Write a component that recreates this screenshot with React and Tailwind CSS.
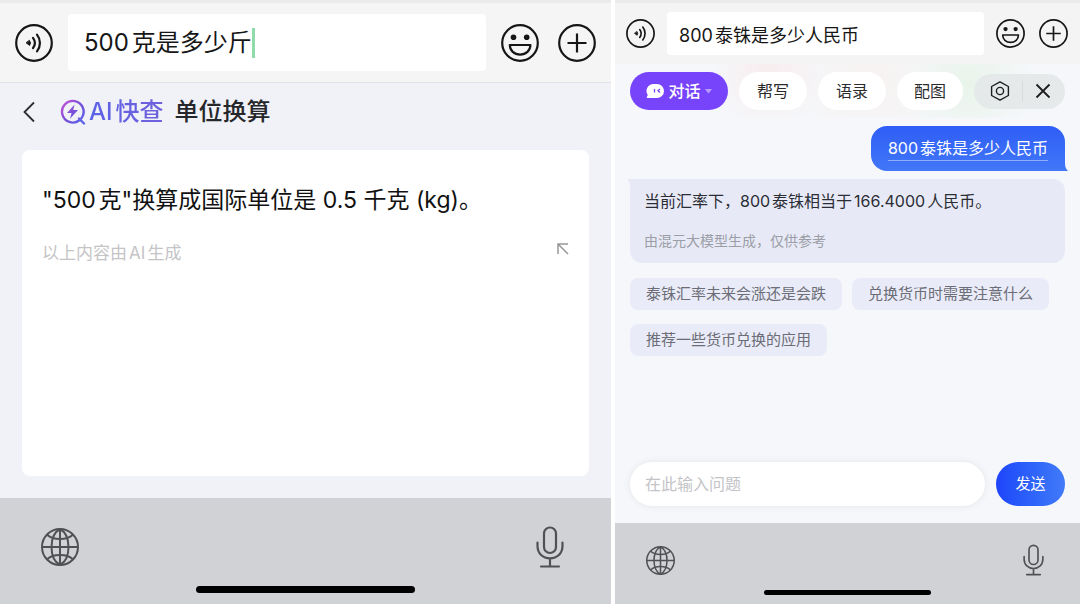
import React, { useState } from 'react'

const suggestions = ['泰铢汇率未来会涨还是会跌', '兑换货币时需要注意什么', '推荐一些货币兑换的应用']

const VoiceIcon = ({ className }) => (
  <svg viewBox="0 0 38 38" fill="none" stroke="#161616" strokeWidth="2.2" strokeLinecap="round" className={className}>
    <circle cx="19" cy="19" r="17.8" />
    <path d="M14.600 16.600a4 4 0 0 1 0 4.800L11.400 19z" fill="#161616" strokeWidth="1" strokeLinejoin="round" />
    <path d="M18 13.900a8.500 8.500 0 0 1 0 10.200M22 10.600a13.500 13.500 0 0 1 0 16.800" />
  </svg>
)

const SmileIcon = ({ className }) => (
  <svg viewBox="0 0 38 38" fill="none" stroke="#161616" strokeWidth="2.2" strokeLinejoin="round" className={className}>
    <circle cx="19" cy="19" r="17.8" />
    <circle cx="12.500" cy="13.200" r="2.800" fill="#161616" stroke="none" />
    <circle cx="25.700" cy="13.200" r="2.800" fill="#161616" stroke="none" />
    <path d="M8.800 21h20.600c0 5.600-4.400 9.600-10.300 9.600S8.800 26.600 8.800 21z" />
  </svg>
)

const PlusIcon = ({ className }) => (
  <svg viewBox="0 0 38 38" fill="none" stroke="#161616" strokeWidth="2.2" className={className}>
    <circle cx="19" cy="19" r="17.8" />
    <path d="M19 9.500v19M9.500 19h19" />
  </svg>
)

const GlobeIcon = ({ className }) => (
  <svg viewBox="0 0 38 38" fill="none" stroke="#505155" strokeWidth="2" className={className}>
    <circle cx="19" cy="19" r="18" />
    <path d="M19 1v36M1 19h36" />
    <path d="M19 1c-5.500 3-8.500 10-8.500 18s3 15 8.500 18M19 1c5.500 3 8.500 10 8.500 18s-3 15-8.500 18" />
    <path d="M6.200 6.800C9 9.500 13.500 11 19 11s10-1.500 12.800-4.200M6.200 31.200C9 28.500 13.500 27 19 27s10 1.500 12.800 4.200" />
  </svg>
)

const MicIcon = ({ className }) => (
  <svg viewBox="0 0 28 42" fill="none" stroke="#505155" strokeWidth="2.2" strokeLinecap="round" className={className}>
    <rect x="8" y="1.500" width="12" height="25.500" rx="6" />
    <path d="M1.500 16.500v3.500c0 7.500 5.500 12.300 12.500 12.300s12.500-4.800 12.500-12.300v-3.500M14 32.500v8M5 40.500h18" />
  </svg>
)

const QuickSearchIcon = () => (
  <svg viewBox="0 0 26 26" fill="none" className="size-[26px]">
    <defs>
      <linearGradient id="quick" x1="2" y1="3" x2="23" y2="23" gradientUnits="userSpaceOnUse">
        <stop stopColor="#c453d6" />
        <stop offset="0.5" stopColor="#7a4fd8" />
        <stop offset="1" stopColor="#5a63ea" />
      </linearGradient>
    </defs>
    <path d="M19.500 21.200A10.800 10.800 0 1 1 21.600 19M19 19.500L24 24.500" stroke="url(#quick)" strokeWidth="2.4" strokeLinecap="round" strokeLinejoin="round" />
    <path d="M14.600 5.500L7 13.900h4.600L10 19.800l8-8.800h-4.800z" fill="url(#quick)" />
  </svg>
)

const LeftPanel = () => {
  const [text, setText] = useState('500克是多少斤')

  return (
    <section className="flex flex-col bg-[#f0f2f7]">
      <div className="flex items-center border-t-3 border-b border-t-[#ebebec] border-b-[#e1e1e5] bg-[#f5f5f6] px-[15px] pt-[11px] pb-[11px]">
        <button aria-label="语音输入">
          <VoiceIcon className="size-[38px]" />
        </button>
        <label className="mx-[15px] flex h-[57px] flex-1 items-center rounded-sm bg-white px-4">
          <input
            aria-label="消息"
            value={text}
            onChange={(e) => setText(e.target.value)}
            className="field-sizing-content text-2xl text-[#161616] outline-none"
          />
          <span className="h-[30px] w-[3px] bg-[#8fdcaa]" />
        </label>
        <button aria-label="表情">
          <SmileIcon className="size-[38px]" />
        </button>
        <button aria-label="更多" className="ml-[19px]">
          <PlusIcon className="size-[38px]" />
        </button>
      </div>

      <div className="flex flex-1 flex-col px-[22px] pt-3 pb-[22px]">
        <header className="flex h-[34px] items-center">
          <button aria-label="返回">
            <svg viewBox="0 0 14 22" fill="none" stroke="#2b2c30" strokeWidth="1.8" className="h-[22px] w-[14px]">
              <path d="M12 1.500L2.500 11l9.500 9.500" />
            </svg>
          </button>
          <div className="ml-6 flex items-center gap-[3px]">
            <QuickSearchIcon />
            <span className="bg-linear-to-r from-[#5b62e6] to-[#7060dc] bg-clip-text text-2xl font-medium text-transparent">
              AI快查
            </span>
          </div>
          <h1 className="ml-[11px] text-2xl font-medium text-[#26272b]">单位换算</h1>
        </header>

        <article className="mt-[21px] flex-1 rounded-lg bg-white px-5 pt-8">
          <p className="text-[23px] leading-9 text-[#111]">"500克"换算成国际单位是 0.5 千克 (kg)。</p>
          <div className="mt-[21px] flex items-center justify-between">
            <p className="text-[17px] leading-7 text-[#c4c4c6]">以上内容由AI生成</p>
            <button aria-label="填入" className="mb-2">
              <svg viewBox="0 0 12 12" fill="none" stroke="#98989b" strokeWidth="1.5" className="size-3">
                <path d="M1 11V1h10M1 1l10 10" />
              </svg>
            </button>
          </div>
        </article>
      </div>

      <footer className="flex h-[106px] flex-col items-center bg-[#d1d2d6]">
        <div className="flex w-full items-center justify-between pt-7 pr-[47px] pl-[41px]">
          <button aria-label="切换键盘">
            <GlobeIcon className="size-[38px]" />
          </button>
          <button aria-label="听写">
            <MicIcon className="h-[42px] w-7" />
          </button>
        </div>
        <div className="mt-[18px] h-[7px] w-[219px] rounded-full bg-black" />
      </footer>
    </section>
  )
}

const RightPanel = () => {
  const [text, setText] = useState('800泰铢是多少人民币')
  const [question, setQuestion] = useState('')

  return (
    <section className="flex flex-col bg-[#f5f7fa]">
      <div className="flex items-center border-t-3 border-[#ebebec] bg-[#f4f4f5] pt-[9px] pr-3 pb-[9px] pl-[11px]">
        <button aria-label="语音输入">
          <VoiceIcon className="size-[29px]" />
        </button>
        <input
          aria-label="消息"
          value={text}
          onChange={(e) => setText(e.target.value)}
          className="mx-3 h-[43px] min-w-0 flex-1 rounded-sm bg-white px-3 text-lg text-[#161616] outline-none"
        />
        <button aria-label="表情">
          <SmileIcon className="size-[29px]" />
        </button>
        <button aria-label="更多" className="ml-[14px]">
          <PlusIcon className="size-[29px]" />
        </button>
      </div>

      <nav className="flex items-center gap-[11px] bg-[radial-gradient(circle_at_33%_20%,#f8ecee_0,transparent_18%),radial-gradient(circle_at_76%_35%,#e8f4ea_0,transparent_18%),radial-gradient(circle_at_55%_30%,#f7f2f1_0,transparent_30%)] px-[15px] py-2 text-base text-[#2b2b2e]">
        <button className="flex h-[38px] w-[98px] items-center justify-center gap-1 rounded-full bg-[#7744fb] font-medium text-white">
          <svg viewBox="0 0 18 16" className="h-4 w-[18px]">
            <path d="M8 1h3a7 7 0 0 1 0 14H1.500c-.800 0-1-.700-.600-1.300L1.800 12A7 7 0 0 1 8 1z" fill="#fff" />
            <path d="M8.500 6v3.500M14 6l-2 1.700 2 1.700" fill="none" stroke="#7744fb" strokeWidth="1.3" />
          </svg>
          对话
          <svg viewBox="0 0 7 5" className="h-[5px] w-[7px]">
            <path d="M0 0h7L3.500 4.500z" fill="#b79dfd" />
          </svg>
        </button>
        <button className="h-[38px] w-[68px] rounded-full bg-white">帮写</button>
        <button className="h-[38px] w-[68px] rounded-full bg-white">语录</button>
        <button className="h-[38px] w-[66px] rounded-full bg-white">配图</button>
        <div className="ml-auto flex h-[35px] w-[91px] items-center justify-between rounded-full bg-[#e5e9e9] pr-[14px] pl-4">
          <button aria-label="设置">
            <svg viewBox="0 0 20 20" fill="none" stroke="#1d1d1f" strokeWidth="1.4" strokeLinejoin="round" className="size-5">
              <path d="M10 .900l8.400 4.600v9L10 19.100l-8.400-4.600v-9z" />
              <circle cx="10" cy="10" r="3.600" />
            </svg>
          </button>
          <span className="h-5 w-px bg-[#d8dbdc]" />
          <button aria-label="关闭">
            <svg viewBox="0 0 16 16" fill="none" stroke="#1d1d1f" strokeWidth="1.8" className="size-4">
              <path d="M1.500 1.500l13 13M14.500 1.500l-13 13" />
            </svg>
          </button>
        </div>
      </nav>

      <div className="flex flex-1 flex-col px-[15px] pb-[17px]">
        <div className="relative mt-2 self-end rounded-2xl rounded-br-none bg-linear-to-b from-[#2f5df6] to-[#4277f8] px-[17px] pt-[10px] pb-[10px]">
          <p className="border-b border-[#90adfa] text-base leading-6 text-white">800泰铢是多少人民币</p>
          <svg viewBox="0 0 3 8" className="absolute bottom-0 left-full h-2 w-[3px]">
            <path d="M0 0c0 4 1 6 3 8H0z" fill="#4277f8" />
          </svg>
        </div>

        <div className="relative mt-2 rounded-xl rounded-tl-none bg-[#e7eaf6] px-[14px] pt-[10px] pb-[10px]">
          <svg viewBox="0 0 3 8" className="absolute top-0 right-full h-2 w-[3px]">
            <path d="M3 8c0-4-1-6-3-8h3z" fill="#e7eaf6" />
          </svg>
          <p className="text-base leading-6 text-[#2b2d35]">当前汇率下，800泰铢相当于166.4000人民币。</p>
          <p className="mt-4 text-sm leading-6 text-[#9b9da7]">由混元大模型生成，仅供参考</p>
        </div>

        <div className="mt-[15px] flex flex-wrap gap-x-[10px] gap-y-[14px]">
          {suggestions.map((item) => (
            <button key={item} className="h-8 rounded-lg bg-[#e9ebf8] px-4 text-[15px] text-[#6c6d76]">
              {item}
            </button>
          ))}
        </div>

        <form className="mt-auto flex gap-[11px]" onSubmit={(e) => e.preventDefault()}>
          <input
            aria-label="问题"
            placeholder="在此输入问题"
            value={question}
            onChange={(e) => setQuestion(e.target.value)}
            className="h-11 min-w-0 flex-1 rounded-full bg-white px-[15px] text-base shadow-[0_0_6px_#e3e5e9] outline-none placeholder:text-[#c3c4c8]"
          />
          <button type="submit" className="h-11 w-[69px] rounded-full bg-linear-to-r from-[#1f44fa] to-[#417af8] text-[15px] text-white">
            发送
          </button>
        </form>
      </div>

      <footer className="flex h-[81px] flex-col items-center bg-[#d1d2d6]">
        <div className="flex w-full items-center justify-between pt-[21px] pr-9 pl-[31px]">
          <button aria-label="切换键盘">
            <GlobeIcon className="size-[29px]" />
          </button>
          <button aria-label="听写">
            <MicIcon className="h-8 w-[21px]" />
          </button>
        </div>
        <div className="mt-[14px] h-[5px] w-[167px] rounded-full bg-black" />
      </footer>
    </section>
  )
}

const App = () => {
  return (
    <main className="grid min-h-screen grid-cols-[611fr_465fr] gap-1 bg-white font-[Inter,'Noto_Sans_CJK_SC',sans-serif] [text-autospace:normal]">
      <LeftPanel />
      <RightPanel />
    </main>
  )
}

export default App
